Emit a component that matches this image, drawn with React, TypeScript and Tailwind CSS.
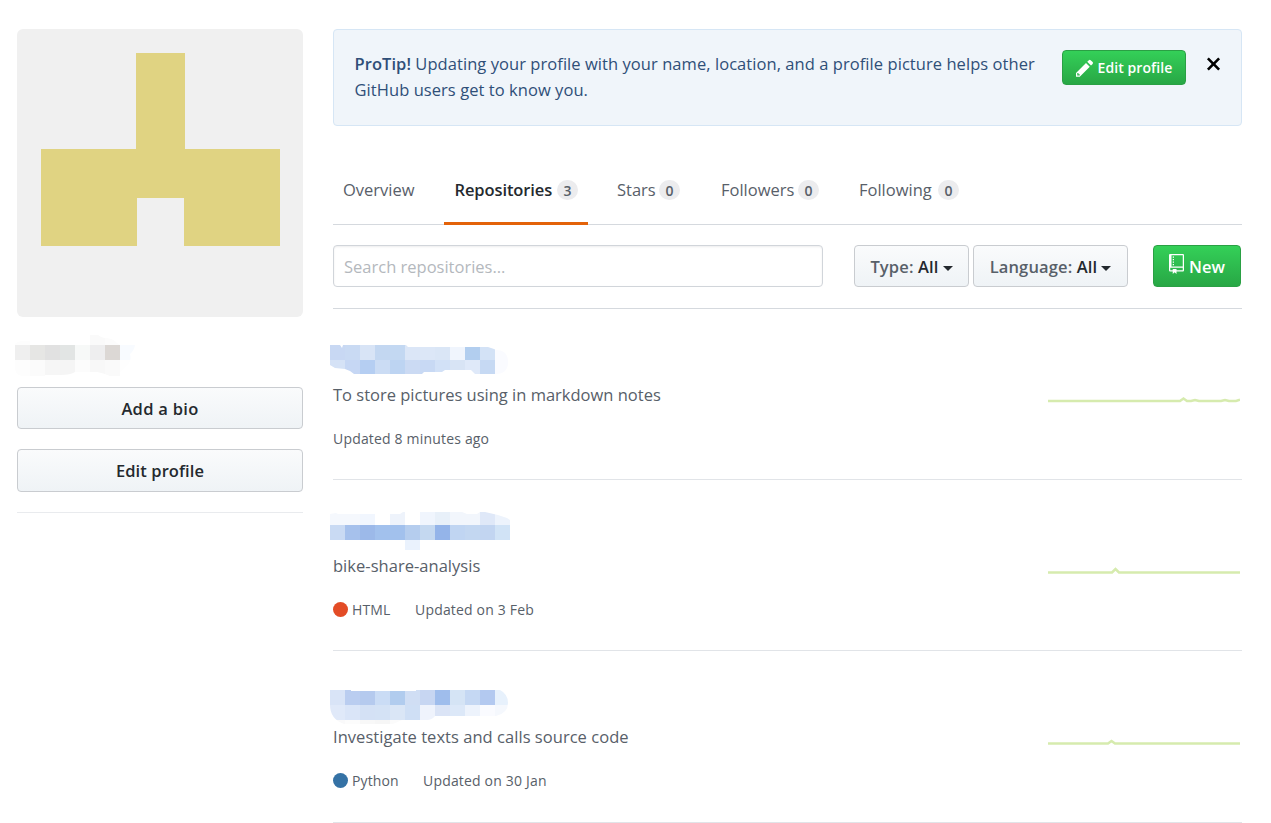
import { type ReactNode } from "react";

type Cell = [x: number, y: number, w: number, h: number, fill: string];

function Mosaic({ id, width, height, outline, cells }: { id: string; width: number; height: number; outline: string; cells: Cell[] }) {
  return (
    <svg width={width} height={height} viewBox={`0 0 ${width} ${height}`} className="block" shapeRendering="crispEdges" aria-hidden="true">
      <clipPath id={id}>
        <path d={outline} />
      </clipPath>
      <g clipPath={`url(#${id})`}>
        {cells.map(([x, y, w, h, fill], i) => (
          <rect key={i} x={x} y={y} width={w} height={h} fill={fill} />
        ))}
      </g>
    </svg>
  );
}

const row = (y: number, h: number, colors: string[]): Cell[] => colors.map((c, i) => [i * 15, y, 15, h, c]);

const userMosaic: Cell[] = [
  ...row(0, 10, ["#fdfdfd", "#fdfdfd", "#fefefe", "#ffffff", "#ffffff", "#fafafa", "#fcfcfc", "#ffffff"]),
  ...row(10, 15, ["#efefef", "#e6e6e4", "#e1e1e1", "#e2e5e4", "#f7f9f8", "#eeeeef", "#dcd8d5", "#f8fbff"]),
  ...row(25, 16, ["#fdfdfd", "#fbfbfb", "#f6f6f6", "#f5f5f5", "#fcfcfc", "#f8f8f8", "#fafafa", "#fefefe"]),
];

const repoMosaics: Cell[][] = [
  [
    ...row(0, 15, ["#c8d8f3", "#c9daf3", "#d8e4f6", "#c3d7f1", "#c3d8f2", "#dbe6f7", "#dce7f7", "#dae6f6", "#f0f5fd", "#b2ceef", "#d3e2f6", "#fafbff"]),
    ...row(15, 15, ["#d5e2f6", "#c6d7f4", "#b5cef2", "#cbdcf4", "#bdd4f2", "#cbdaf3", "#c8d9f4", "#d2e1f7", "#d8e4f5", "#dfe9f9", "#c6d9f3", "#fafbff"]),
  ],
  [
    ...row(0, 13, ["#f5f8fd", "#f5f8fd", "#f1f6fe", "#ffffff", "#eef3fb", "#ffffff", "#f0f5fd", "#e8f0f9", "#f2f6fc", "#f2f6fc", "#dfe8f8", "#edf3fc"]),
    ...row(13, 15, ["#c9daf3", "#a6c1ec", "#9cb9e9", "#a2c1ed", "#a2c1ed", "#b5cdee", "#c4d8f0", "#94b4e9", "#c0d5f2", "#c3d7f1", "#c2d5f1", "#d1e3f6"]),
    [75, 28, 15, 10, "#eaf2fd"],
  ],
  [
    ...row(0, 15, ["#d9e4f7", "#bacdf0", "#b5caee", "#cadcf5", "#b1ccee", "#d0def4", "#c7d6f2", "#9fbdec", "#d5e4f5", "#c5d8f3", "#b3c9f0", "#e7f1fc"]),
    ...row(15, 15, ["#e0e9f9", "#dae5f8", "#d4e1f5", "#d4e2f5", "#dae6f6", "#cfdff5", "#eff3fc", "#dbe4f6", "#dce8f8", "#edf3fc", "#fafbff", "#f5f8fd"]),
    ...row(30, 4, ["#f9f9fa", "#fcfcfc", "#f8f8f8", "#f6f6f6", "#fbfbfb"]),
  ],
];

const outlines = [
  "M0 0H10L12 3L13 0H76L78 2H158L164 4L166 5Q178 5 178 17Q178 29 166 29H145L141 25H115L112 27H94L92 29H24L20 26L15 24L5 23L0 20Z",
  "M0 2L6 1L8 2H70L73 0H132L137 2H147L150 0H155L168 3L177 6L180 8V28H90V38H75V28H0Z",
  "M0 0H21V1H86V0H170Q178 4 178 13Q178 23 166 26H105Q102 30 97 30H72L63 34H14Q0 29 0 15Z",
];

function Counter({ children }: { children: ReactNode }) {
  return (
    <span className="flex h-5 w-[21px] items-center justify-center rounded-full bg-[#ececee] pt-px text-[14px] font-semibold text-[#586069]">
      {children}
    </span>
  );
}

function Caret() {
  return <span className="mt-[3px] h-0 w-0 border-x-5 border-t-5 border-x-transparent border-t-[#24292e]" />;
}

const grayButton =
  "flex items-center justify-center rounded-[4px] border border-[#c9ccd0] bg-linear-to-b from-[#fafbfc] to-[#eff3f6] pt-[2px] font-[550] text-[#24292e]";
const greenButton =
  "flex items-center rounded-[4px] border border-[#2aa044] bg-linear-to-b from-[#34d058] to-[#28a745] font-semibold text-white";

function Tab({ label, count, className }: { label: string; count: number; className: string }) {
  return (
    <a className={`flex items-center ${className}`}>
      <span>{label}</span>
      <Counter>{count}</Counter>
    </a>
  );
}

interface Repo {
  description: string;
  descriptionClass: string;
  language?: string;
  languageClass?: string;
  dot?: string;
  updated: string;
  mosaicHeight: number;
  mosaicClass: string;
  graph: string;
}

const repos: Repo[] = [
  {
    description: "To store pictures using in markdown notes",
    descriptionClass: "",
    updated: "Updated 8 minutes ago",
    mosaicHeight: 30,
    mosaicClass: "pt-9",
    graph: "M0 10H132L135.500 7.500L139 10H143L147 9L151 10H173L177 9L181 10H188L192 8.800",
  },
  {
    description: "bike-share-analysis",
    descriptionClass: "tracking-[0.03px]",
    language: "HTML",
    languageClass: "w-[63px]",
    dot: "bg-[#e34c26]",
    updated: "Updated on 3 Feb",
    mosaicHeight: 38,
    mosaicClass: "pt-8",
    graph: "M0 10.500H64L67.500 7L71 10.500H192",
  },
  {
    description: "Investigate texts and calls source code",
    descriptionClass: "tracking-[0.04px]",
    language: "Python",
    languageClass: "w-[71px]",
    dot: "bg-[#3572a5]",
    updated: "Updated on 30 Jan",
    mosaicHeight: 34,
    mosaicClass: "pt-[39px]",
    graph: "M0 10.500H60L63.500 8L67 10.500H192",
  },
];

function RepoItem({ repo, index }: { repo: Repo; index: number }) {
  return (
    <li className="flex h-[171px] justify-between border-b border-[#e1e4e8] text-[#586069] last:h-[172px]">
      <div>
        <div className={`-ml-[3px] h-[74px] ${repo.mosaicClass}`}>
          <Mosaic id={`repo-${index}`} width={180} height={repo.mosaicHeight} outline={outlines[index]} cells={repoMosaics[index]} />
        </div>
        <p className={`h-6 text-[16.5px] leading-6 whitespace-nowrap ${repo.descriptionClass}`}>{repo.description}</p>
        <div className="mt-[22px] flex h-5 items-center text-[14px] leading-5 whitespace-nowrap">
          {repo.language && (
            <>
              <span className={`mr-1 mb-[2px] h-[15px] w-[15px] rounded-full ${repo.dot}`} />
              <span className={`tracking-[0.1px] ${repo.languageClass}`}>{repo.language}</span>
            </>
          )}
          <span className="tracking-[0.18px]">{repo.updated}</span>
        </div>
      </div>
      <svg width="192" height="16" viewBox="0 0 192 16" className="mt-[82px] mr-[2px]" fill="none" stroke="#d6ebae" strokeWidth="2.5">
        <path d={repo.graph} />
      </svg>
    </li>
  );
}

export default function App() {
  return (
    <div className="flex h-[823px] w-[1271px] overflow-hidden bg-white pt-[29px] pl-[17px] font-['Open_Sans','Noto_Sans',sans-serif] text-[16.5px]">
      <aside className="w-[286px] shrink-0">
        <div className="h-[288px] rounded-[6px] bg-[#f0f0f0]">
          <svg width="286" height="288" viewBox="0 0 286 288" shapeRendering="crispEdges" fill="#e0d382">
            <path d="M119 24H168V120H263V217H167V169H120V217H24V120H119Z" />
          </svg>
        </div>
        <div className="-ml-[2px] h-[70px] pt-[18px]">
          <Mosaic
            id="user"
            width={120}
            height={41}
            outline="M0 9Q3 6 8 6H15V10H75V0H83Q88 4 92 3Q99 4 102 8L105 10H120Q119 16 115 19Q118 28 105 37V41H95Q88 38 82 37H60Q56 40 45 40H30V41H7Q1 40 0 34Z"
            cells={userMosaic}
          />
        </div>
        <button className={`${grayButton} h-[42px] w-full tracking-[0.3px]`}>Add a bio</button>
        <button className={`${grayButton} mt-5 h-[43px] w-full tracking-[0.1px]`}>Edit profile</button>
        <div className="mt-5 h-px bg-[#e9ebee]" />
      </aside>

      <main className="ml-[30px] w-[909px] shrink-0">
        <section className="flex h-[97px] items-start rounded-[4px] border border-[#d6e6f5] bg-[#f0f5fa] pt-[21px] pr-[20px] pl-[20.5px] text-[#2f4f78]">
          <p className="w-[707.5px] leading-[26px] tracking-[0.06px] whitespace-nowrap">
            <strong className="font-semibold">ProTip!</strong> Updating your profile with your name, location, and a profile picture helps other
            <br />
            GitHub users get to know you.
          </p>
          <button className={`${greenButton} -mt-px h-[35px] w-[124px] pl-[13px] text-[14px] tracking-[0.08px]`}>
            <svg width="17.5" height="20" viewBox="0 0 14 16" fill="currentColor" className="mr-[4px]">
              <path d="M0 12v3h3l8-8-3-3-8 8zm3 2H1v-2h1v1h1v1zm10.300-9.300L12 6 9 3l1.300-1.300a.996.996 0 0 1 1.410 0l1.590 1.590c.39.39.39 1.020 0 1.410z" />
            </svg>
            <span className="whitespace-nowrap">Edit profile</span>
          </button>
          <svg width="15" height="20" viewBox="0 0 12 16" fill="#000" className="mt-[3px] ml-[20px]">
            <path d="M7.480 8l3.750 3.750-1.480 1.480L6 9.480l-3.750 3.750-1.480-1.480L4.520 8 .77 4.250l1.480-1.480L6 6.520l3.750-3.750 1.480 1.480z" />
          </svg>
        </section>

        <nav className="mt-[30px] flex h-[69px] border-b border-[#d5d9de] text-[#586069]">
          <a className="flex w-[111px] items-center pl-[10px]">Overview</a>
          <Tab label="Repositories" count={3} className="h-[69px] w-[144px] justify-between border-b-3 border-[#e36209] pt-[2px] pr-[10px] pl-[10.5px] font-semibold tracking-[-0.1px] text-[#24292e]" />
          <Tab label="Stars" count={0} className="ml-[29px] w-[63px] justify-between" />
          <Tab label="Followers" count={0} className="ml-[41px] w-[98px] justify-between" />
          <Tab label="Following" count={0} className="ml-[40px] w-[100px] justify-between" />
        </nav>

        <div className="flex h-[84px] items-start border-b border-[#d5d9de] pt-5">
          <input
            placeholder="Search repositories…"
            className="h-[42px] w-[490px] rounded-[4px] border border-[#d1d5da] pl-[10px] text-[16.5px] shadow-[inset_0_1px_2px_rgba(27,31,35,0.075)] outline-none placeholder:text-[#b4b8bd]"
          />
          <button className={`${grayButton} ml-[31px] h-[42px] w-[115px] gap-[4px]`}>
            <span className="tracking-[0.15px] whitespace-nowrap">
              <span className="text-[#586069]">Type:</span> All
            </span>
            <Caret />
          </button>
          <button className={`${grayButton} ml-[4px] h-[42px] w-[155px] gap-[4px]`}>
            <span className="tracking-[0.15px] whitespace-nowrap">
              <span className="text-[#586069]">Language:</span> All
            </span>
            <Caret />
          </button>
          <button className={`${greenButton} ml-[25px] h-[42px] w-[88px] pl-[15px]`}>
            <svg width="15" height="20" viewBox="0 0 12 16" fill="currentColor" className="mr-[5px] mb-[5px]">
              <path d="M4 9H3V8h1v1zm0-3H3v1h1V6zm0-2H3v1h1V4zm0-2H3v1h1V2zm8-1v12c0 .55-.45 1-1 1H6v2l-1.500-1.500L3 16v-2H1c-.55 0-1-.45-1-1V1c0-.55.45-1 1-1h10c.55 0 1 .45 1 1zm-1 10H1v2h2v-1h3v1h5v-2zm0-10H2v9h9V1z" />
            </svg>
            <span className="pt-[2px]">New</span>
          </button>
        </div>

        <ul>
          {repos.map((repo, i) => (
            <RepoItem key={repo.description} repo={repo} index={i} />
          ))}
        </ul>
      </main>
    </div>
  );
}
